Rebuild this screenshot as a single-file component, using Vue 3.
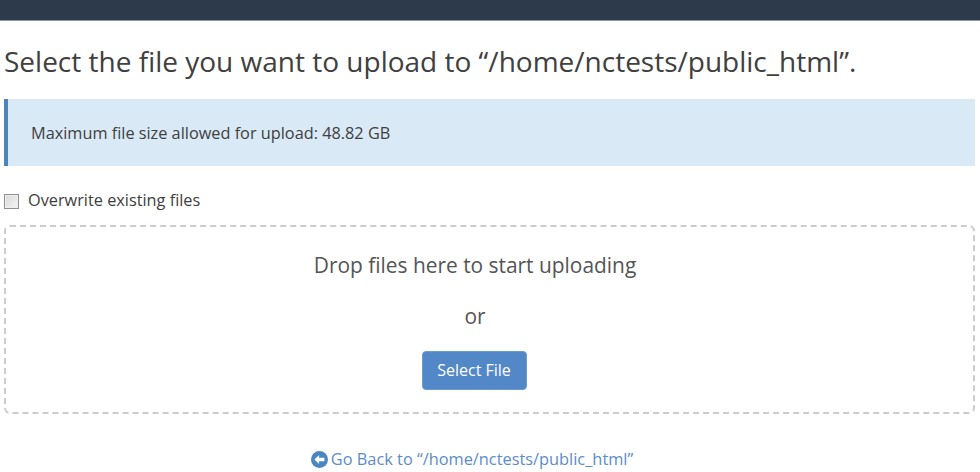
<script setup>
const uploadPath = '/home/nctests/public_html';
const maxSize = '48.82 GB';
</script>

<template>
  <div class="page">
    <div class="topbar"></div>
    <main class="content">
      <h1 class="title">Select the file you want to upload to “{{ uploadPath }}”.</h1>

      <div class="notice">Maximum file size allowed for upload: {{ maxSize }}</div>

      <label class="overwrite">
        <input type="checkbox" class="overwrite-box" />
        <span>Overwrite existing files</span>
      </label>

      <section class="dropzone">
        <div class="drop-text">Drop files here to start uploading</div>
        <div class="drop-or">or</div>
        <button type="button" class="select-btn">Select File</button>
      </section>

      <a class="back-link" href="#">
        <svg class="back-icon" viewBox="0 0 16 16" aria-hidden="true">
          <circle cx="8" cy="8" r="8" fill="#4a86c0" />
          <path d="M3.2 8 L7.6 3.8 L7.6 6.4 L12.6 6.4 L12.6 9.6 L7.6 9.6 L7.6 12.2 Z" fill="#fff" />
        </svg>
        <span>Go Back to “{{ uploadPath }}”</span>
      </a>
    </main>
  </div>
</template>

<style>
html,
body {
  margin: 0;
  background: #fff;
}
</style>

<style scoped>
.page {
  width: 980px;
  height: 472px;
  overflow: hidden;
  font-family: "Open Sans", "Liberation Sans", sans-serif;
  color: #404040;
}

.topbar {
  height: 21px;
  background: #2c3a4c;
  border-bottom: 1px solid #8d96a2;
  box-sizing: border-box;
}

.content {
  padding: 0 5px 0 4px;
}

.title {
  margin: 21px 0 0;
  font-size: 28px;
  line-height: 38px;
  font-weight: 400;
}

.notice {
  margin-top: 19px;
  height: 67px;
  box-sizing: border-box;
  padding-left: 23px;
  display: flex;
  align-items: center;
  font-size: 16.3px;
  background: #d9e9f6;
  border-left: 4px solid #4a86bd;
}

.overwrite {
  display: flex;
  align-items: center;
  gap: 9px;
  margin-top: 24px;
  height: 20px;
  font-size: 16.3px;
}

.overwrite-box {
  appearance: none;
  width: 15px;
  height: 15px;
  margin: 3px 0 0;
  box-sizing: border-box;
  border: 1px solid #8f8f8f;
  background: linear-gradient(135deg, #d8d8d8, #f4f4f4);
  box-shadow: inset 0 0 0 1px #efefef;
}

.dropzone {
  margin-top: 15px;
  height: 189px;
  box-sizing: border-box;
  padding-right: 29px;
  border: 2px dashed #ccc;
  border-radius: 6px;
  display: flex;
  flex-direction: column;
  align-items: center;
  color: #555;
}

.drop-text {
  margin-top: 23px;
  font-size: 20.9px;
  line-height: 30px;
}

.drop-or {
  margin-top: 21px;
  font-size: 20.9px;
  line-height: 30px;
}

.select-btn {
  margin: 20px 2px 0 0;
  width: 105px;
  height: 39px;
  padding: 0 0 2px;
  font-family: inherit;
  font-size: 16px;
  color: #fff;
  background: #5288c7;
  border: 1px solid #6a9ad0;
  border-radius: 4px;
}

.back-link {
  margin-top: 35px;
  display: flex;
  justify-content: center;
  align-items: center;
  gap: 3px;
  padding-right: 35px;
  font-size: 16.35px;
  line-height: 20px;
  color: #5b8dc9;
  text-decoration: none;
}

.back-icon {
  width: 17px;
  height: 17px;
}
</style>
